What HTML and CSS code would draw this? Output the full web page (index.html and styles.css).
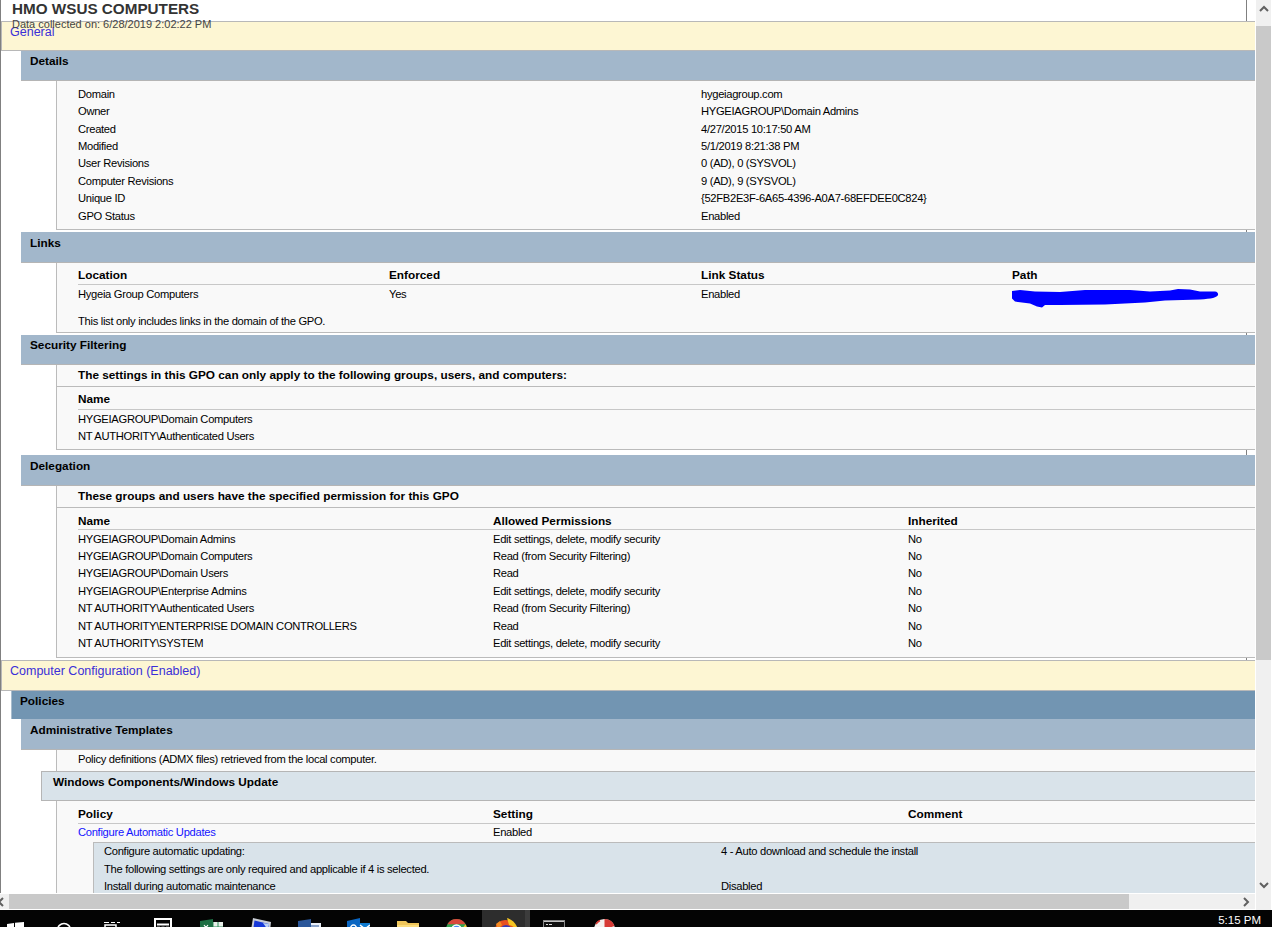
FILE: index.html
```html
<!DOCTYPE html>
<html lang="en">
<head>
    <meta charset="UTF-8">
    <meta name="viewport" content="width=device-width, initial-scale=1.0">
    <title>HMO WSUS COMPUTERS</title>
    <link rel="stylesheet" href="styles.css">
</head>
<body>
<div class="window">
    <div class="main">
        <div class="viewer">
            <div class="content">
                <div class="report">
                    <div class="header">
                        <h1>HMO WSUS COMPUTERS</h1>
                        <div class="collected">Data collected on: 6/28/2019 2:02:22 PM</div>
                    </div>

                    <div class="banner banner-first"><a href="#">General</a></div>

                    <div class="bar bar2">Details</div>
                    <div class="body details">
                        <div class="row col2"><span>Domain</span><span>hygeiagroup.com</span></div>
                        <div class="row col2"><span>Owner</span><span>HYGEIAGROUP\Domain Admins</span></div>
                        <div class="row col2"><span>Created</span><span>4/27/2015 10:17:50 AM</span></div>
                        <div class="row col2"><span>Modified</span><span>5/1/2019 8:21:38 PM</span></div>
                        <div class="row col2"><span>User Revisions</span><span>0 (AD), 0 (SYSVOL)</span></div>
                        <div class="row col2"><span>Computer Revisions</span><span>9 (AD), 9 (SYSVOL)</span></div>
                        <div class="row col2"><span>Unique ID</span><span>{52FB2E3F-6A65-4396-A0A7-68EFDEE0C824}</span></div>
                        <div class="row col2"><span>GPO Status</span><span>Enabled</span></div>
                    </div>

                    <div class="bar bar2 bar-tall">Links</div>
                    <div class="body links">
                        <div class="row col4 thead"><span>Location</span><span>Enforced</span><span>Link Status</span><span>Path</span></div>
                        <div class="row col4">
                            <span>Hygeia Group Computers</span><span>Yes</span><span>Enabled</span>
                            <span class="redacted">
                                <svg width="210" height="20" viewBox="0 0 210 20"><path d="M0 3 L8 2 L23 3.5 L48 4 L73 2 L118 2 L138 3.5 L158 2.5 L166 1 L178 1.5 L188 3.500 L203 3.500 Q206.500 4 206 7 Q205 10.500 188 11.500 L153 12.500 L133 14.500 L93 16.500 L48 17 L33 17 L30 19.500 L25 18.500 L18 15.500 L3 13.500 L0 10.500 Z" fill="#0000ff"/></svg>
                            </span>
                        </div>
                        <div class="note">This list only includes links in the domain of the GPO.</div>
                    </div>

                    <div class="bar bar2">Security Filtering</div>
                    <div class="body security">
                        <div class="lead">The settings in this GPO can only apply to the following groups, users, and computers:</div>
                        <div class="row thead">Name</div>
                        <div class="row">HYGEIAGROUP\Domain Computers</div>
                        <div class="row">NT AUTHORITY\Authenticated Users</div>
                    </div>

                    <div class="bar bar2 bar-tall">Delegation</div>
                    <div class="body delegation">
                        <div class="lead">These groups and users have the specified permission for this GPO</div>
                        <div class="row col3 thead"><span>Name</span><span>Allowed Permissions</span><span>Inherited</span></div>
                        <div class="row col3"><span>HYGEIAGROUP\Domain Admins</span><span>Edit settings, delete, modify security</span><span>No</span></div>
                        <div class="row col3"><span>HYGEIAGROUP\Domain Computers</span><span>Read (from Security Filtering)</span><span>No</span></div>
                        <div class="row col3"><span>HYGEIAGROUP\Domain Users</span><span>Read</span><span>No</span></div>
                        <div class="row col3"><span>HYGEIAGROUP\Enterprise Admins</span><span>Edit settings, delete, modify security</span><span>No</span></div>
                        <div class="row col3"><span>NT AUTHORITY\Authenticated Users</span><span>Read (from Security Filtering)</span><span>No</span></div>
                        <div class="row col3"><span>NT AUTHORITY\ENTERPRISE DOMAIN CONTROLLERS</span><span>Read</span><span>No</span></div>
                        <div class="row col3"><span>NT AUTHORITY\SYSTEM</span><span>Edit settings, delete, modify security</span><span>No</span></div>
                    </div>

                    <div class="banner"><a href="#">Computer Configuration (Enabled)</a></div>

                    <div class="bar bar1">Policies</div>
                    <div class="bar bar2 bar-tall">Administrative Templates</div>
                    <div class="body plain">Policy definitions (ADMX files) retrieved from the local computer.</div>
                    <div class="bar bar3">Windows Components/Windows Update</div>
                    <div class="body policy">
                        <div class="row col3 thead"><span>Policy</span><span>Setting</span><span>Comment</span></div>
                        <div class="row col3"><span><a href="#">Configure Automatic Updates</a></span><span>Enabled</span><span></span></div>
                        <div class="nested">
                            <div class="row nested-row"><span>Configure automatic updating:</span><span>4 - Auto download and schedule the install</span></div>
                            <div class="row">The following settings are only required and applicable if 4 is selected.</div>
                            <div class="row nested-row"><span>Install during automatic maintenance</span><span>Disabled</span></div>
                        </div>
                    </div>
                </div>
            </div>
            <div class="hscroll">
                <svg class="harrow-left" width="9" height="10" viewBox="0 0 9 10"><path d="M3 1 L-1 5 L3 9" fill="none" stroke="#606060" stroke-width="2"/></svg>
                <div class="hthumb"></div>
                <svg class="harrow" width="8" height="10" viewBox="0 0 8 10"><path d="M1 1 L5 5 L1 9" fill="none" stroke="#606060" stroke-width="2"/></svg>
            </div>
        </div>
        <div class="vscroll">
            <div class="vbutton">
                <svg width="10" height="8" viewBox="0 0 10 8"><path d="M1 6 L5 2 L9 6" fill="none" stroke="#606060" stroke-width="2"/></svg>
            </div>
            <div class="vthumb"></div>
            <svg class="varrow" width="10" height="8" viewBox="0 0 10 8"><path d="M1 2 L5 6 L9 2" fill="none" stroke="#606060" stroke-width="2"/></svg>
        </div>
    </div>

    <div class="taskbar">
        <div class="task-icons">
            <div class="task-btn">
                <svg width="24" height="24" viewBox="0 0 24 24"><path d="M4 8 L11 7 L11 14 L4 14 Z M12 6.800 L21 6 L21 14 L12 14 Z" fill="#fff"/></svg>
            </div>
            <div class="task-btn">
                <svg width="24" height="24" viewBox="0 0 24 24"><circle cx="12" cy="14" r="6.500" fill="none" stroke="#fff" stroke-width="1.500"/></svg>
            </div>
            <div class="task-btn">
                <svg width="24" height="24" viewBox="0 0 24 24"><path d="M3 6.500 H8 M10 6.500 H14 M16 6.500 H19" stroke="#fff" stroke-width="1"/><rect x="4" y="9" width="11" height="10" fill="none" stroke="#fff" stroke-width="1.500"/></svg>
            </div>
            <div class="task-btn">
                <svg width="24" height="24" viewBox="0 0 24 24"><rect x="5" y="3" width="16" height="20" fill="none" stroke="#fff" stroke-width="2"/><path d="M7 8.500 H19" stroke="#fff" stroke-width="2"/><path d="M7 11.500 H19" stroke="#fff" stroke-width="1.500" stroke-dasharray="3 1.500"/></svg>
            </div>
            <div class="task-btn">
                <svg width="24" height="24" viewBox="0 0 24 24"><rect x="9" y="6" width="15" height="18" fill="#e8efe9"/><path d="M14 6 V24 M19 6 V24 M9 11 H24" stroke="#2f8f5b" stroke-width="1"/><path d="M1 5 L14 3 V24 L1 22 Z" fill="#1d7044"/><path d="M5 9 L9 14 M9 9 L5 14" stroke="#fff" stroke-width="1.200"/></svg>
            </div>
            <div class="task-btn">
                <svg width="24" height="24" viewBox="0 0 24 24"><path d="M5 2 L23 6 L21 24 L2 20 Z" fill="#c8ccd4"/><path d="M6.500 4.500 L21 8 L19.500 22 L4.500 18 Z" fill="#1638d8"/><path d="M15 7 L21 8 L20 14 Z" fill="#bcd2f5"/></svg>
            </div>
            <div class="task-btn">
                <svg width="24" height="24" viewBox="0 0 24 24"><rect x="10" y="7" width="14" height="17" fill="#e9eef6"/><path d="M14 10 H22 M14 13 H22 M14 16 H22" stroke="#2a5699" stroke-width="1.200"/><path d="M1 5 L14 3 V24 L1 22 Z" fill="#2a5699"/></svg>
            </div>
            <div class="task-btn">
                <svg width="24" height="24" viewBox="0 0 24 24"><path d="M1 5 L14 2 V24 L1 21 Z" fill="#0a66c2"/><rect x="14" y="7" width="10" height="17" fill="#0f7bd0"/><path d="M14 9 L19 13 L24 9" fill="none" stroke="#fff" stroke-width="1.500"/><ellipse cx="7.500" cy="13" rx="3" ry="4" fill="none" stroke="#fff" stroke-width="1.500"/></svg>
            </div>
            <div class="task-btn">
                <svg width="24" height="24" viewBox="0 0 24 24"><path d="M2 5 H11 L13 7 H24 V22 H2 Z" fill="#f0c65a"/><rect x="2" y="9" width="22" height="13" fill="#fbdc7c"/></svg>
            </div>
            <div class="task-btn">
                <svg width="24" height="24" viewBox="0 0 24 24"><circle cx="12.500" cy="13.500" r="10.500" fill="#2fa24f"/><path d="M3.400 8.300 A10.500 10.500 0 0 1 21.600 8.300 L12.500 8.300 Z" fill="#d8473a"/><path d="M21.600 8.300 A10.500 10.500 0 0 1 13 24 L17 14 Z" fill="#f6c22d"/><circle cx="12.500" cy="13.500" r="4.500" fill="#4c8bf0" stroke="#fff" stroke-width="1.500"/></svg>
            </div>
            <div class="task-btn task-active">
                <svg width="24" height="24" viewBox="0 0 24 24"><circle cx="12" cy="14" r="10" fill="#e8501f"/><circle cx="13" cy="15" r="6" fill="#3a3bb0"/><path d="M14 2 C20 4 25 9 25 16 C23 12 20 10 16 9 Z" fill="#f6c523"/><path d="M3 8 L7 5 L9 9 L5 13 Z" fill="#f58a1f"/></svg>
            </div>
            <div class="task-btn">
                <svg width="24" height="24" viewBox="0 0 24 24"><rect x="1.500" y="4.500" width="21" height="19" fill="#111" stroke="#8a8a8a"/><path d="M2 5.500 H22" stroke="#c4c4c4" stroke-width="1"/><path d="M4 8.500 H6 M7 8.500 H10" stroke="#ddd" stroke-width="1"/></svg>
            </div>
            <div class="task-btn">
                <svg width="24" height="24" viewBox="0 0 24 24"><circle cx="13.500" cy="13.500" r="10.500" fill="#f4f0ee"/><path d="M13.500 3 A10.500 10.500 0 0 1 23.500 10 L13.500 13.500 Z" fill="#d63a35"/><path d="M5 8 A10.500 10.500 0 0 1 9 4.500" fill="none" stroke="#d63a35" stroke-width="1.500"/></svg>
            </div>
        </div>
        <div class="tray">5:15 PM</div>
    </div>
</div>
</body>
</html>
```

FILE: styles.css
```css
* {
    box-sizing: border-box;
}
body {
    margin: 0;
    font-family: "Liberation Sans", Arial, sans-serif;
    font-size: 11.200px;
    letter-spacing: -0.300px;
    color: #000;
    background-color: #fff;
}
a {
    text-decoration: none;
    color: #1414ff;
}
.window {
    width: 1272px;
    height: 927px;
    display: flex;
    flex-direction: column;
    overflow: hidden;
}
.main {
    height: 910px;
    display: flex;
}
.viewer {
    width: 1255px;
    display: flex;
    flex-direction: column;
}
.content {
    height: 893px;
    overflow: hidden;
}
.report {
    width: 1247px;
    min-height: 1000px;
    border-left: 1px solid #808080;
    border-right: 1px solid #808080;
}

/* title block, the date runs over the first banner */
.header {
    position: relative;
    height: 21px;
    padding-left: 11px;
}
.header h1 {
    margin: 0;
    font-size: 15.250px;
    letter-spacing: 0;
    line-height: 18px;
    color: #333;
}
.collected {
    font-size: 11px;
    letter-spacing: 0;
    line-height: 12px;
    color: #444;
}

/* section headers */
.banner {
    width: 1400px;
    height: 31px;
    padding: 3px 0 0 8px;
    background-color: #fdf6d3;
    border: 1px solid #b8b8b8;
    font-size: 12.500px;
    letter-spacing: 0;
    line-height: 14px;
}
.banner a {
    color: #3a2fd8;
}
.banner-first {
    height: 30px;
}
.bar {
    width: 1400px;
    height: 30px;
    padding-left: 9px;
    font-size: 11.800px;
    font-weight: bold;
    letter-spacing: 0;
    line-height: 21px;
    border-bottom: 1px solid #b5b5b5;
}
.banner-first + .bar {
    line-height: 20px;
}
.bar-tall {
    height: 31px;
    line-height: 22px;
}
.bar1 {
    height: 28px;
    margin-left: 10px;
    padding-left: 8px;
    line-height: 20px;
    background-color: #7295b2;
    border-left: 1px solid #a8bccd;
    border-bottom: 0;
}
.bar2 {
    margin-left: 20px;
    background-color: #a2b7cb;
}
.bar3 {
    margin-left: 40px;
    padding-left: 11px;
    background-color: #d9e3ea;
    border: 1px solid #b5b5b5;
}

/* section bodies */
.body {
    width: 1400px;
    margin-left: 55px;
    padding-left: 21px;
    background-color: #f9f9f9;
    border-left: 1px solid #bbb;
    border-bottom: 1px solid #bbb;
    margin-bottom: 2.500px;
}
.details {
    padding-top: 4.300px;
    padding-bottom: 4.500px;
}
.links {
    padding-bottom: 1.400px;
}
.security {
    padding-bottom: 4.200px;
    margin-bottom: 5px;
}
.delegation {
    padding-bottom: 5px;
}
.plain {
    height: 21px;
    line-height: 19px;
    margin-bottom: 0;
    border-bottom: 0;
}
.policy {
    margin-bottom: 0;
    border-bottom: 0;
}
.row {
    height: 17.400px;
    padding-top: 0.600px;
    line-height: 17.400px;
    white-space: nowrap;
}
.policy .row {
    padding-top: 0;
}
.col2 {
    display: grid;
    grid-template-columns: 623px 623px;
}
.col3 {
    display: grid;
    grid-template-columns: 415px 415px 415px;
}
.col4 {
    display: grid;
    grid-template-columns: 311px 312px 311px 311px;
}
.thead {
    width: 1245px;
    height: 22px;
    padding-top: 0;
    font-size: 11.800px;
    letter-spacing: 0;
    line-height: 24px;
    font-weight: bold;
    border-bottom: 1px solid #c8c8c8;
}
.lead {
    height: 22px;
    margin-left: -21px;
    padding-left: 21px;
    font-size: 11.800px;
    letter-spacing: 0;
    line-height: 20px;
    font-weight: bold;
    border-bottom: 1px solid #bbb;
}
.security .thead,
.policy .thead {
    height: 23px;
}
.delegation .thead,
.policy .thead {
    line-height: 26px;
}
.note {
    margin-top: 9.300px;
    padding-top: 0.600px;
    line-height: 17.400px;
}
.redacted {
    display: block;
    margin-top: 2px;
}
.redacted svg {
    display: block;
}
.nested {
    margin-left: 15px;
    padding: 0.700px 0 2px 10px;
    background-color: #d9e3ea;
    border-left: 1px solid #bbb;
    border-top: 1px solid #bbb;
}
.nested-row {
    display: grid;
    grid-template-columns: 617px 500px;
}

/* scrollbars */
.hscroll {
    height: 17px;
    display: flex;
    align-items: center;
    background-color: #f0f0f0;
    border-top: 1px solid #fff;
    border-bottom: 1px solid #fff;
}
.harrow-left {
    flex-shrink: 0;
}
.hthumb {
    width: 1120px;
    height: 15px;
    background-color: #c9c9c9;
}
.harrow {
    margin-left: 114px;
}
.vscroll {
    width: 17px;
    display: flex;
    flex-direction: column;
    align-items: center;
    border-left: 1px solid #fff;
    border-right: 1px solid #fff;
    background-color: #f0f0f0;
}
.vbutton {
    height: 26px;
    padding-top: 5px;
}
.vbutton svg {
    display: block;
}
.vthumb {
    width: 15px;
    height: 634px;
    background-color: #c9c9c9;
}
.varrow {
    margin-top: 221px;
}

/* taskbar, only the tops of the icons show */
.taskbar {
    height: 17px;
    display: flex;
    justify-content: space-between;
    background-color: #040404;
    overflow: hidden;
}
.task-icons {
    display: flex;
    margin-left: -9.500px;
}
.task-btn {
    width: 49px;
    height: 17px;
    padding-top: 6px;
    display: flex;
    justify-content: center;
    overflow: hidden;
}
.task-btn svg {
    flex-shrink: 0;
}
.task-active {
    background: linear-gradient(90deg, #040404 1.500px, #2d2d2d 1.500px, #2d2d2d 44.500px, #3c3c3c 44.500px);
}
.tray {
    padding-right: 11px;
    color: #fff;
    font-size: 11.500px;
    letter-spacing: 0;
    line-height: 21px;
}
```
